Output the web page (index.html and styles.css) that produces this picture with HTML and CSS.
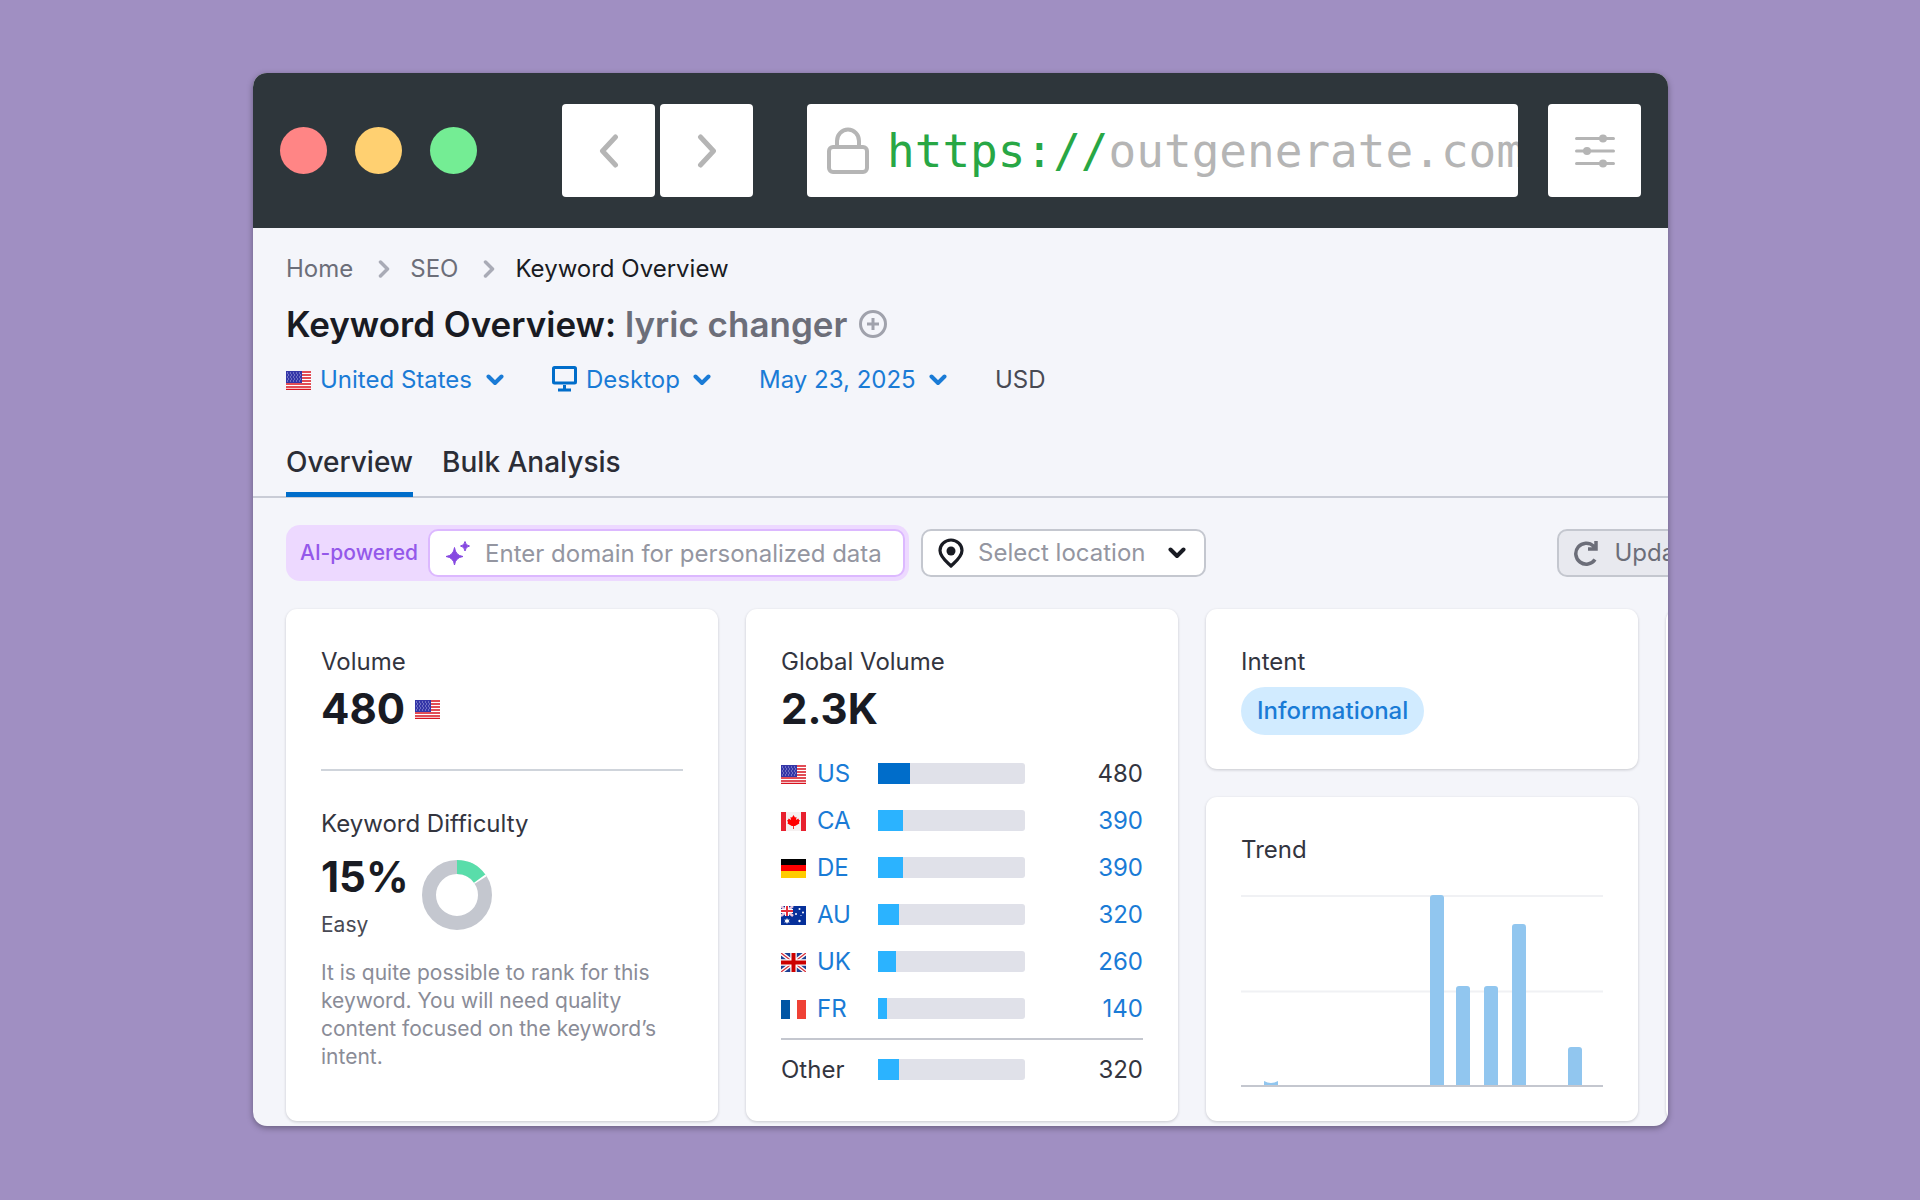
FILE: index.html
```html
<!DOCTYPE html>
<html lang="en">
<head>
	<meta charset="UTF-8">
	<meta name="viewport" content="width=device-width,initial-scale=1">
	<title>Keyword Overview: lyric changer</title>
	<link rel="stylesheet" href="styles.css">
</head>
<body>
	<!-- shared shapes -->
	<svg class="defs" aria-hidden="true">
		<defs>
			<symbol id="flag-us" viewBox="0 0 25 19">
				<rect width="25" height="19" fill="#fff"/>
				<path d="M0 1h25M0 4h25M0 7h25M0 10h25M0 13h25M0 16h25M0 18.500h25" stroke="#d8131f" stroke-width="1.500"/>
				<rect width="16" height="12" fill="#3436a8"/>
				<path d="M1 2h15M2 4h14M1 6h15M2 8h14M1 10h15" stroke="#a9abe0" stroke-width="1" stroke-dasharray="1 2"/>
			</symbol>
			<symbol id="flag-ca" viewBox="0 0 25 19">
				<rect width="25" height="19" fill="#f5f1f1"/>
				<path d="M0 0h5v19H0zM20 0h5v19h-5z" fill="#e8212f"/>
				<path d="M12.500 3l1.500 2.500 1.500-.5-.4 3 2.200-1.500.7 1.500 1 .6-1 1.400.3 1.400-4.300 2.600h-1.200v3h-.8v-3h-1.200l-4.300-2.600.5-1.400-1-1.400 1-.6.700-1.500 2.200 1.500-.4-3 1.500.5z" fill="#f00"/>
			</symbol>
			<symbol id="flag-de" viewBox="0 0 25 19">
				<rect width="25" height="19" fill="#f00"/>
				<rect width="25" height="6" fill="#000"/>
				<rect y="12" width="25" height="7" fill="#fc0"/>
			</symbol>
			<symbol id="flag-au" viewBox="0 0 25 19">
				<rect width="25" height="19" fill="#06309a"/>
				<path d="M0 0l12 10M12 0L0 10" stroke="#e9c5dc" stroke-width="2.500"/>
				<path d="M6 0v10M0 5h12" stroke="#fff" stroke-width="4"/>
				<path d="M6 0v10M0 5h12" stroke="#e8303c" stroke-width="2"/>
				<path d="M6 12l.8 1.800 2-.4-1.200 1.600 1.200 1.600-2-.4L6 18l-.8-1.800-2 .4L4.400 15l-1.200-1.600 2 .4z" fill="#fff"/>
				<g fill="#fff"><circle cx="18.500" cy="3" r="1"/><circle cx="15" cy="8" r="1"/><circle cx="22" cy="6.500" r="1"/><circle cx="20" cy="9.500" r=".6"/><circle cx="18.500" cy="15" r="1.200"/></g>
			</symbol>
			<symbol id="flag-uk" viewBox="0 0 25 19">
				<rect width="25" height="19" fill="#1e3f92"/>
				<path d="M0 0l25 19M25 0L0 19" stroke="#fff" stroke-width="4"/>
				<path d="M0 0l25 19M25 0L0 19" stroke="#d8303c" stroke-width="1.300"/>
				<path d="M12.500 0v19M0 9.500h25" stroke="#fff" stroke-width="6.500"/>
				<path d="M12.500 0v19M0 9.500h25" stroke="#c00" stroke-width="4"/>
			</symbol>
			<symbol id="flag-fr" viewBox="0 0 25 19">
				<rect width="25" height="19" fill="#fff"/>
				<rect width="9" height="19" fill="#0055a4"/>
				<rect x="16" width="9" height="19" fill="#ef4135"/>
			</symbol>
			<symbol id="chevron-down" viewBox="0 0 18 12">
				<path d="M2.500 2.500L9 9l6.500-6.500" fill="none" stroke="currentColor" stroke-width="4" stroke-linecap="round" stroke-linejoin="round"/>
			</symbol>
			<symbol id="chevron-right" viewBox="0 0 12 18">
				<path d="M2.500 2L9.500 9l-7 7" fill="none" stroke="currentColor" stroke-width="3.500" stroke-linecap="round" stroke-linejoin="round"/>
			</symbol>
		</defs>
	</svg>

	<div class="window">
		<header class="browser-bar">
			<div class="dots">
				<span class="dot red"></span>
				<span class="dot yellow"></span>
				<span class="dot green"></span>
			</div>
			<div class="nav">
				<button type="button" class="bar-btn" aria-label="Back">
					<svg width="20" height="34" viewBox="0 0 20 34"><path d="M16.500 3L3.500 17l13 14"/></svg>
				</button>
				<button type="button" class="bar-btn" aria-label="Forward">
					<svg width="20" height="34" viewBox="0 0 20 34"><path d="M3.500 3l13 14-13 14"/></svg>
				</button>
			</div>
			<div class="address">
				<svg class="lock" width="42" height="48" viewBox="0 0 42 48" aria-hidden="true"><rect x="2" y="20" width="38" height="25" rx="4"/><path d="M10 20v-6a11 11.500 0 0 1 22 0v6"/></svg>
				<label for="url">https://</label>
				<input id="url" type="text" value="outgenerate.com">
			</div>
			<button type="button" class="bar-btn" aria-label="Settings">
				<svg class="sliders" width="40" height="34" viewBox="0 0 40 34"><path d="M1.500 4.500h37M1.500 17h37M1.500 29.500h37"/><g><circle cx="28" cy="4.500" r="4"/><circle cx="12" cy="17" r="4"/><circle cx="28" cy="29.500" r="4"/></g></svg>
			</button>
		</header>

		<main class="page">
			<nav class="breadcrumbs" aria-label="Breadcrumb">
				<a href="#home">Home</a>
				<svg width="12" height="18"><use href="#chevron-right"/></svg>
				<a href="#seo">SEO</a>
				<svg width="12" height="18"><use href="#chevron-right"/></svg>
				<span class="current">Keyword Overview</span>
			</nav>

			<div class="title">
				<h1>Keyword Overview: <span>lyric changer</span></h1>
				<button type="button" aria-label="Add keyword">
					<svg width="28" height="28" viewBox="0 0 28 28"><circle cx="14" cy="14" r="12.500"/><path d="M14 8v12M8 14h12"/></svg>
				</button>
			</div>

			<div class="filters">
				<label class="filter">
					<svg class="flag"><use href="#flag-us"/></svg>
					<select aria-label="Country"><option>United States</option></select>
					<svg class="chevron"><use href="#chevron-down"/></svg>
				</label>
				<label class="filter">
					<svg class="monitor" width="25" height="28" viewBox="0 0 25 28"><rect x="1.500" y="1.500" width="22" height="15.500" rx="1"/><path d="M12.500 19v5M6 24h13"/></svg>
					<select aria-label="Device"><option>Desktop</option></select>
					<svg class="chevron"><use href="#chevron-down"/></svg>
				</label>
				<label class="filter">
					<select aria-label="Date"><option>May 23, 2025</option></select>
					<svg class="chevron"><use href="#chevron-down"/></svg>
				</label>
				<span>USD</span>
			</div>

			<nav class="tabs" aria-label="Report">
				<a href="#overview" class="active">Overview</a>
				<a href="#bulk">Bulk Analysis</a>
			</nav>

			<div class="toolbar">
				<div class="ai">
					<label for="domain">AI-powered</label>
					<div class="ai-field">
						<svg width="26" height="26" viewBox="0 0 26 26" aria-hidden="true"><path d="M9.500 7.500Q10.500 15.500 18 16.500 10.500 17.500 9.500 25 8.500 17.500 1 16.500 8.500 15.500 9.500 7.500zM20 1.500q.6 4 4.500 4.500-3.900.6-4.500 5-.6-4.400-4.500-5 3.900-.5 4.500-4.500z" fill="#8649e1" stroke="#8649e1" stroke-linejoin="round"/></svg>
						<input id="domain" type="text" placeholder="Enter domain for personalized data">
					</div>
				</div>
				<label class="location">
					<svg width="26" height="30" viewBox="0 0 26 30" aria-hidden="true"><path d="M13 28C9 24 2 19 2 12.500a11 10.500 0 0 1 22 0C24 19 17 24 13 28z" fill="none" stroke="#191b23" stroke-width="3.200" stroke-linejoin="round"/><circle cx="13" cy="13" r="4.500" fill="#191b23"/></svg>
					<select aria-label="Location"><option>Select location</option></select>
					<svg class="chevron"><use href="#chevron-down"/></svg>
				</label>
				<button type="button" class="update">
					<svg width="26" height="26" viewBox="0 0 26 26" aria-hidden="true"><path d="M22 19.500A10.500 10.500 0 1 1 20.500 6l2.500 2.500M23 1v8h-8" fill="none" stroke="currentColor" stroke-width="3.500"/></svg>
					Update metrics
				</button>
			</div>

			<div class="cards">
				<section class="card">
					<h2>Volume</h2>
					<div class="volume"><strong>480</strong><svg class="flag"><use href="#flag-us"/></svg></div>
					<hr>
					<h2>Keyword Difficulty</h2>
					<div class="difficulty">
						<div>
							<strong>15%</strong>
							<span>Easy</span>
						</div>
						<svg width="70" height="70" viewBox="0 0 70 70" aria-hidden="true">
							<circle cx="35" cy="35" r="28" fill="none" stroke="#c4c7cf" stroke-width="14"/>
							<circle cx="35" cy="35" r="28" fill="none" stroke="#fff" stroke-width="14" pathLength="100" stroke-dasharray="16 84" transform="rotate(-90 35 35)"/>
							<circle cx="35" cy="35" r="28" fill="none" stroke="#59ddaa" stroke-width="14" pathLength="100" stroke-dasharray="15 85" transform="rotate(-90 35 35)"/>
						</svg>
					</div>
					<p>It is quite possible to rank for this keyword. You will need quality content focused on the keyword’s intent.</p>
				</section>

				<section class="card">
					<h2>Global Volume</h2>
					<strong>2.3K</strong>
					<table>
						<tbody>
							<tr class="own"><th scope="row"><svg class="flag"><use href="#flag-us"/></svg><a href="#us">US</a></th><td><div class="bar"><i style="width:22%"></i></div></td><td>480</td></tr>
							<tr><th scope="row"><svg class="flag"><use href="#flag-ca"/></svg><a href="#ca">CA</a></th><td><div class="bar"><i style="width:17%"></i></div></td><td><a href="#ca">390</a></td></tr>
							<tr><th scope="row"><svg class="flag"><use href="#flag-de"/></svg><a href="#de">DE</a></th><td><div class="bar"><i style="width:17%"></i></div></td><td><a href="#de">390</a></td></tr>
							<tr><th scope="row"><svg class="flag"><use href="#flag-au"/></svg><a href="#au">AU</a></th><td><div class="bar"><i style="width:14%"></i></div></td><td><a href="#au">320</a></td></tr>
							<tr><th scope="row"><svg class="flag"><use href="#flag-uk"/></svg><a href="#uk">UK</a></th><td><div class="bar"><i style="width:12%"></i></div></td><td><a href="#uk">260</a></td></tr>
							<tr><th scope="row"><svg class="flag"><use href="#flag-fr"/></svg><a href="#fr">FR</a></th><td><div class="bar"><i style="width:6%"></i></div></td><td><a href="#fr">140</a></td></tr>
						</tbody>
						<tfoot>
							<tr><th scope="row">Other</th><td><div class="bar"><i style="width:14%"></i></div></td><td>320</td></tr>
						</tfoot>
					</table>
				</section>

				<div class="stack">
					<section class="card">
						<h2>Intent</h2>
						<span class="tag">Informational</span>
					</section>
					<section class="card trend">
						<h2>Trend</h2>
						<svg class="chart" viewBox="0 0 362 192" role="img" aria-label="Search volume by month">
							<path d="M0 1h362M0 96.500h362" stroke="#f0f1f4" stroke-width="2"/>
							<g fill="#91c6ef">
								<path d="M23 186q7 4 14 0v5H23z"/>
								<path d="M189 191V3q0-3 3-3h8q3 0 3 3v188z"/>
								<path d="M215 191V94q0-3 3-3h8q3 0 3 3v97z"/>
								<path d="M243 191V94q0-3 3-3h8q3 0 3 3v97z"/>
								<path d="M271 191V32q0-3 3-3h8q3 0 3 3v159z"/>
								<path d="M327 191v-36q0-3 3-3h8q3 0 3 3v36z"/>
							</g>
							<path d="M0 191h362" stroke="#c4c7cf" stroke-width="2"/>
						</svg>
					</section>
				</div>

				<section class="card"></section>
			</div>
		</main>
	</div>
</body>
</html>
```
FILE: styles.css
```css
*{
	box-sizing: border-box;
}
body{
	margin: 0;
	padding: 73px 252px 73px 253px;
	min-height: 100vh;
	background: #a08fc2;
	font-family: Inter, "Liberation Sans", sans-serif;
	font-size: 24px;
	line-height: 30px;
	color: #191b23;
}
.defs{
	position: absolute;
	width: 0;
	height: 0;
}
svg{
	display: block;
	flex: none;
}
a{
	color: inherit;
	text-decoration: none;
}
button, input, select{
	margin: 0;
	padding: 0;
	border: 0;
	background: none;
	font: inherit;
	color: inherit;
}
select{
	appearance: none;
}
.window{
	overflow: hidden;
	border-radius: 14px;
	background: #f4f5fa;
	box-shadow: 0 2px 6px rgba(0, 0, 0, .35);
}

/* browser bar */
.browser-bar{
	display: flex;
	align-items: center;
	padding: 31px 27px;
	background: #2e363b;
}
.dots{
	display: flex;
	gap: 28px;
	margin-right: 85px;
}
.dot{
	width: 47px;
	height: 47px;
	border-radius: 50%;
}
.red{
	background: #ff8585;
}
.yellow{
	background: #ffd071;
}
.green{
	background: #74ed94;
}
.nav{
	display: flex;
	gap: 5px;
	margin-right: 54px;
}
.bar-btn{
	display: flex;
	flex: none;
	align-items: center;
	justify-content: center;
	width: 93px;
	height: 93px;
	border-radius: 4px;
	background: #fff;
}
.bar-btn svg{
	fill: none;
	stroke: #b5b5b5;
	stroke-width: 5;
	stroke-linecap: round;
	stroke-linejoin: round;
}
.bar-btn .sliders{
	stroke-width: 3;
}
.bar-btn .sliders g{
	fill: #b5b5b5;
	stroke: none;
}
.address{
	display: flex;
	flex: 1;
	align-items: center;
	min-width: 0;
	height: 93px;
	margin-right: 30px;
	padding-left: 20px;
	border-radius: 4px;
	background: #fff;
	overflow: hidden;
	font-family: "DejaVu Sans Mono", "Liberation Mono", monospace;
	font-size: 46px;
	line-height: 60px;
	color: #b5b5b5;
}
.address label{
	color: #28a745;
}
.address input{
	flex: 1;
	min-width: 0;
	height: 60px;
}
.lock{
	margin-right: 18px;
	fill: none;
	stroke: #b5b5b5;
	stroke-width: 4;
}

/* page head */
.page{
	padding: 26px 0 5px 33px;
}
.breadcrumbs{
	display: flex;
	align-items: center;
	color: #6c6e79;
}
.breadcrumbs svg{
	margin: 0 20px 0 25px;
	color: #a9abb6;
}
.breadcrumbs .current{
	color: #191b23;
}
.title{
	display: flex;
	align-items: center;
	gap: 12px;
	margin-top: 18px;
}
.title h1{
	margin: 0;
	font-size: 35px;
	line-height: 44px;
	font-weight: 600;
}
.title h1 span{
	color: #6c6e79;
}
.title svg{
	fill: none;
	stroke: #a0a2ac;
	stroke-width: 3;
}
.flag{
	width: 25px;
	height: 19px;
}
.chevron{
	width: 18px;
	height: 12px;
}
.filters{
	display: flex;
	align-items: center;
	gap: 48px;
	margin-top: 19px;
	color: #484a54;
}
.filter{
	display: flex;
	align-items: center;
	gap: 9px;
	color: #1a7bd6;
}
.filter .chevron{
	margin-left: 4px;
}
.monitor{
	fill: none;
	stroke: #006dca;
	stroke-width: 3;
}
.tabs{
	display: flex;
	gap: 29px;
	margin: 51px 0 0 -33px;
	padding-left: 33px;
	border-bottom: 2px solid #c9ccd6;
	font-size: 28px;
	line-height: 32px;
	font-weight: 500;
	color: #2b2d36;
}
.tabs a{
	margin-bottom: -1px;
	padding-bottom: 14px;
	border-bottom: 5px solid transparent;
}
.tabs .active{
	border-color: #006dca;
}

/* toolbar */
.toolbar{
	display: flex;
	align-items: center;
	margin-top: 27px;
}
.ai{
	display: flex;
	flex: none;
	align-items: center;
	padding: 4px;
	border-radius: 14px;
	background: #edd9ff;
}
.ai label{
	padding: 0 10px;
	font-size: 21px;
	font-weight: 500;
	color: #9458ea;
}
.ai-field{
	display: flex;
	align-items: center;
	gap: 14px;
	width: 477px;
	height: 48px;
	padding-left: 15px;
	border: 2px solid #dcb8ff;
	border-radius: 10px;
	background: #fff;
}
.ai-field input{
	flex: 1;
	min-width: 0;
	height: 40px;
}
.ai-field input::placeholder{
	color: #9496a1;
	opacity: 1;
}
.location{
	display: flex;
	flex: none;
	align-items: center;
	gap: 14px;
	height: 48px;
	margin-left: 12px;
	padding: 0 18px 0 15px;
	border: 2px solid #c4c7cf;
	border-radius: 10px;
	background: #fff;
}
.location select{
	color: #9496a1;
}
.location .chevron{
	margin-left: 8px;
}
.update{
	display: flex;
	flex: none;
	align-items: center;
	gap: 15px;
	height: 48px;
	margin: 0 -136px 0 auto;
	padding: 0 14px;
	border: 2px solid #c4c7cf;
	border-radius: 10px;
	background: #e8e9ef;
	color: #6c6e79;
	white-space: nowrap;
}

/* cards */
.cards{
	display: grid;
	grid-template-columns: repeat(4, minmax(432px, 31%));
	gap: 28px;
	margin-top: 28px;
}
.card{
	padding: 38px 35px 22px;
	border-radius: 11px;
	background: #fff;
	box-shadow: 0 1px 3px rgba(25, 27, 35, .2);
}
.card h2{
	margin: 0;
	font-size: 24px;
	line-height: 30px;
	font-weight: 400;
	color: #33353f;
}
.card strong{
	display: block;
	font-size: 42px;
	line-height: 52px;
	font-weight: 700;
}
.volume{
	display: flex;
	align-items: center;
	gap: 10px;
	margin-top: 6px;
}
hr{
	height: 2px;
	margin: 34px 0 38px;
	border: 0;
	background: #cfd4db;
}
.difficulty{
	display: flex;
	align-items: center;
	gap: 13px;
	margin-top: 12px;
	font-size: 21px;
	line-height: 28px;
	color: #484a54;
}
.difficulty strong{
	margin-bottom: 8px;
	color: #191b23;
}
.card p{
	margin: 20px 0 0;
	font-size: 21px;
	line-height: 28px;
	color: #8a8c97;
}
.card table{
	width: 100%;
	border-collapse: collapse;
}
.card h2 + strong{
	margin: 6px 0 15px;
}
th, td{
	height: 47px;
	padding: 0;
	font-weight: 400;
	text-align: left;
}
th{
	width: 97px;
}
th .flag{
	display: inline-block;
	margin-right: 11px;
	vertical-align: -2px;
}
td:last-child{
	text-align: right;
}
table, tfoot{
	color: #33353f;
}
td a, th a{
	color: #1a7bd6;
}
tbody::after{
	content: "";
	display: block;
	height: 6px;
}
tfoot th, tfoot td{
	height: 60px;
	border-top: 2px solid #c4c7cf;
}
.bar{
	width: 147px;
	height: 21px;
	border-radius: 0 3px 3px 0;
	background: #e0e1e9;
	overflow: hidden;
}
.bar i{
	display: block;
	height: 100%;
	background: #2bb3ff;
}
.own .bar i{
	background: #006dca;
}
.stack{
	display: flex;
	flex-direction: column;
	gap: 28px;
}
.stack .card{
	padding-bottom: 34px;
}
.stack .trend{
	flex: 1;
}
.tag{
	display: inline-block;
	margin-top: 10px;
	padding: 0 16px;
	border-radius: 24px;
	background: #d1ebff;
	line-height: 48px;
	font-weight: 500;
	color: #1a7bd6;
}
.chart{
	width: 100%;
	margin-top: 30px;
}
```
